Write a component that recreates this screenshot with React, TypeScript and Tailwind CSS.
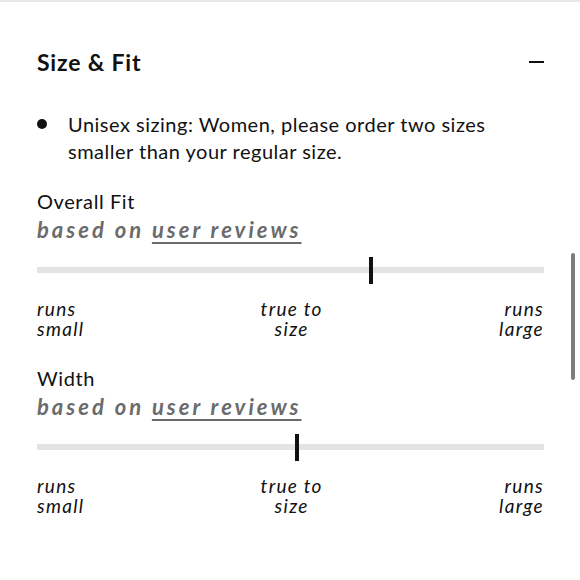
import React from "react";

function FitBlock({ title, pos, first }: { title: string; pos: number; first?: boolean }) {
  return (
    <div className={first ? "mt-[23px]" : "mt-[26px]"}>
      <div className="text-[20px] leading-[26px] tracking-[0.6px] text-[#111]">{title}</div>
      <div className="mt-[2px] text-[22px] leading-[28px] font-bold italic tracking-[3px] text-[#6b6b6b]">
        based on{" "}
        <span className="underline underline-offset-[4px] decoration-[1.5px]">user reviews</span>
      </div>
      <div className="relative mt-[13px] h-[27px]">
        <div className="absolute left-0 right-0 top-[10px] h-[6px] bg-[#e3e3e3]" />
        <div
          className="absolute top-0 h-[27px] w-[4px] bg-[#111]"
          style={{ left: `calc(${pos}% - 2px)` }}
        />
      </div>
      <div className="mt-[15px] flex justify-between text-[19px] leading-[20px] italic tracking-[1.3px] text-[#111]">
        <div className="text-left">
          runs
          <br />
          small
        </div>
        <div className="text-center">
          true to
          <br />
          size
        </div>
        <div className="text-right">
          runs
          <br />
          large
        </div>
      </div>
    </div>
  );
}

export default function App() {
  return (
    <div
      className="relative w-[580px] h-[580px] bg-white overflow-hidden text-[#111]"
      style={{ fontFamily: "Lato, 'Open Sans', sans-serif" }}
    >
      <div className="h-[2px] bg-[#e8e8e8]" />
      <div className="h-[566px] pl-[37px] pr-[36px]">
        <div className="mt-[46px] flex items-center justify-between">
          <h2 className="text-[23px] leading-[28px] font-bold tracking-[0.8px] text-[#111]">Size &amp; Fit</h2>
          <div className="w-[15px] h-[2.5px] bg-[#111]" />
        </div>
        <ul className="mt-[35px]">
          <li className="flex">
            <span className="mt-[8px] w-[10px] h-[10px] rounded-full bg-[#111] mr-[21px] shrink-0" />
            <span className="text-[20px] leading-[27px] tracking-[0.5px]">
              Unisex sizing: Women, please order two sizes smaller than your regular size.
            </span>
          </li>
        </ul>
        <FitBlock title="Overall Fit" pos={65.9} first />
        <FitBlock title="Width" pos={51.3} />
      </div>
      <div className="h-[3px] bg-[#e8e8e8]" />
      <div className="absolute left-[571px] top-[253px] w-[4px] h-[127px] rounded-full bg-[#7d7d7d]" />
    </div>
  );
}
